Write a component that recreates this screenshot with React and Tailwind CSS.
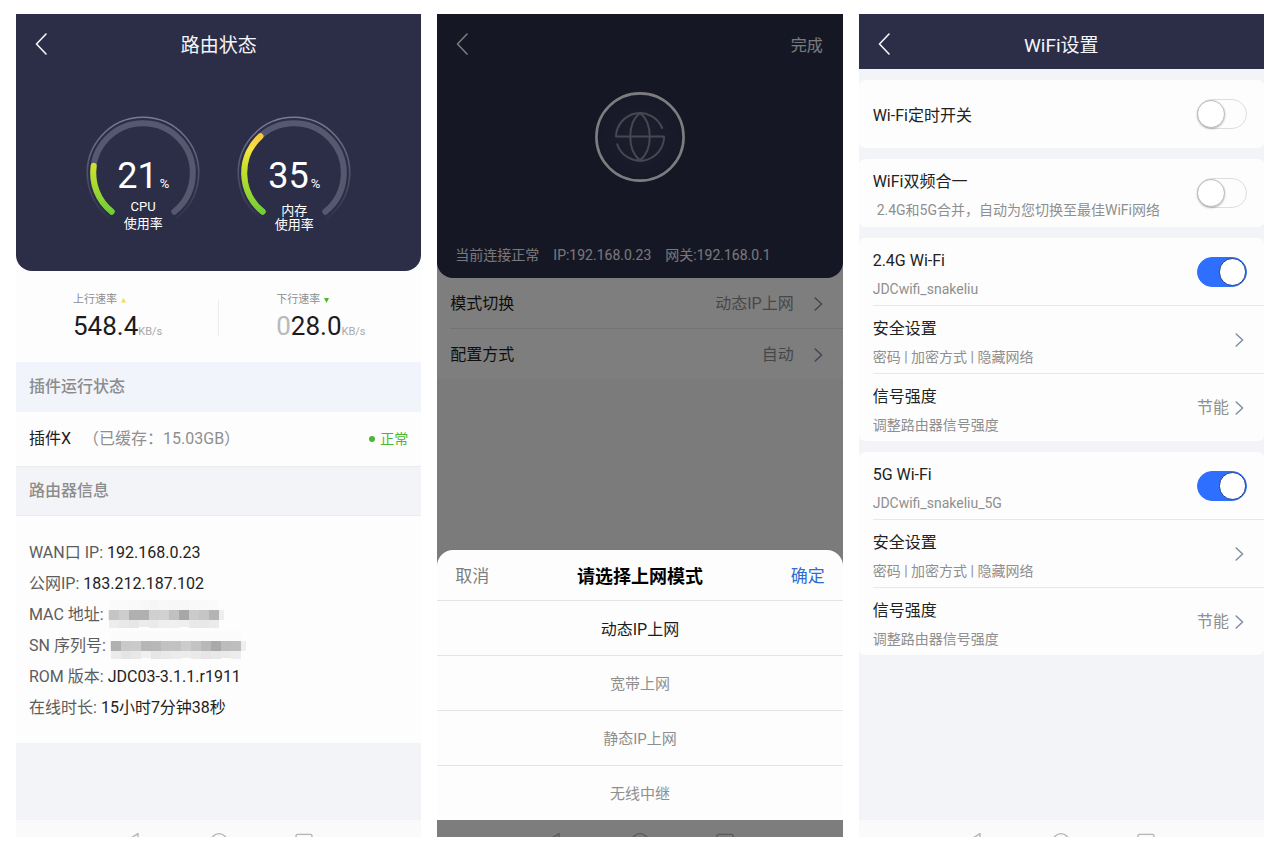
import { useState } from "react";

const CHEVRON_LEFT = "M11 1 L1.5 11 L11 21";

function BackButton({ className }) {
  return (
    <button type="button" aria-label="返回" className={className}>
      <svg width="13" height="22" viewBox="0 0 13 22" fill="none" stroke="currentColor" strokeWidth="1.6" strokeLinecap="round" strokeLinejoin="round">
        <path d={CHEVRON_LEFT} />
      </svg>
    </button>
  );
}

function ChevronRight() {
  return (
    <svg width="9" height="14" viewBox="0 0 9 14" fill="none" stroke="#7f8ea3" strokeWidth="1.5" strokeLinecap="round" strokeLinejoin="round" className="shrink-0" aria-hidden="true">
      <path d="M1.2 1 L7.6 7 L1.2 13" />
    </svg>
  );
}

function TitleBar({ title, action }) {
  return (
    <header className="grid h-[55px] grid-cols-[1fr_auto_1fr] items-center pt-1 text-[#f5f5fa]">
      <BackButton className="w-fit pl-[19px]" />
      <h1 className="pt-1 text-[19px] leading-7">{title}</h1>
      {action && (
        <button type="button" className="justify-self-end pt-1 pr-5 text-base">
          {action}
        </button>
      )}
    </header>
  );
}

function SystemNav() {
  return (
    <nav aria-label="系统导航" className="flex h-[17px] shrink-0 justify-center gap-[67px] overflow-hidden bg-[#fafafa] pt-3 text-[#b4b4b4]">
      <svg width="18" height="18" viewBox="0 0 18 18" fill="none" stroke="currentColor" strokeWidth="1.4" strokeLinejoin="round" className="shrink-0">
        <path d="M13 1.6 V17 L0.8 9.3 Z" />
      </svg>
      <svg width="18" height="18" viewBox="0 0 18 18" fill="none" stroke="currentColor" strokeWidth="1.4" className="shrink-0">
        <circle cx="9" cy="9.6" r="8" />
      </svg>
      <svg width="18" height="18" viewBox="0 0 18 18" fill="none" stroke="currentColor" strokeWidth="1.4" className="shrink-0">
        <rect x="1" y="2.4" width="16" height="15" rx="1.5" />
      </svg>
    </nav>
  );
}

function Phone({ className, children }) {
  return <section className={`relative flex min-h-[823px] min-w-0 flex-col overflow-hidden ${className}`}>{children}</section>;
}

/* ---------- Router status ---------- */

const START = 129;
const SWEEP = 282;

function arc(r, from, to) {
  const point = (deg) => {
    const a = (deg * Math.PI) / 180;
    return `${(57 + r * Math.cos(a)).toFixed(2)} ${(57 + r * Math.sin(a)).toFixed(2)}`;
  };
  return `M${point(from)} A${r} ${r} 0 ${to - from > 180 ? 1 : 0} 1 ${point(to)}`;
}

function Gauge({ id, value, lines, labelClass }) {
  return (
    <div className="relative">
      <svg width="114" height="114" viewBox="0 0 114 114" fill="none" aria-hidden="true">
        <defs>
          <linearGradient id={`${id}-ring`} x1="0" y1="0" x2="0" y2="114" gradientUnits="userSpaceOnUse">
            <stop offset="0" stopColor="#7b7d96" />
            <stop offset="0.5" stopColor="#50526b" />
            <stop offset="0.9" stopColor="#31334d" />
          </linearGradient>
          <linearGradient id={`${id}-bar`} x1="0" y1="97" x2="0" y2="18" gradientUnits="userSpaceOnUse">
            <stop offset="0" stopColor="#6fce33" />
            <stop offset="0.6" stopColor="#cde22c" />
            <stop offset="0.8" stopColor="#f7e63c" />
            <stop offset="1" stopColor="#f5c542" />
          </linearGradient>
        </defs>
        <path d={arc(55.7, 126, 414)} stroke={`url(#${id}-ring)`} strokeWidth="1.6" />
        <path d={arc(49.8, START, START + SWEEP)} stroke="#565870" strokeWidth="6" strokeLinecap="round" />
        <path d={arc(49.8, START, START + (SWEEP * value) / 100)} stroke={`url(#${id}-bar)`} strokeWidth="6" strokeLinecap="round" />
      </svg>
      <div className="absolute inset-x-0 top-10 text-center text-white">
        <p className="text-4xl leading-10">
          {value}
          <span className="ml-0.5 text-[13px] leading-none">%</span>
        </p>
        <p className={labelClass}>
          {lines[0]}
          <br />
          {lines[1]}
        </p>
      </div>
    </div>
  );
}

function Rate({ label, arrow, pad, value }) {
  return (
    <div className="flex-1 pl-[57px]">
      <p className="flex items-center gap-1 text-[11px] leading-4 text-[#8f8f8f]">
        {label}
        {arrow}
      </p>
      <p className="text-[26px] leading-9 text-[#1c1c1c]">
        {pad && <span className="text-[#b9b9b9]">{pad}</span>}
        {value}
        <span className="text-[11px] leading-none text-[#a8a8a8]">KB/s</span>
      </p>
    </div>
  );
}

const MAC_TOP = ["#fafafa", "#fafafa", "#f9f9f9", "#f8f8f8", "#f6f6f6", "#f8f8f8", "#f7f7f7", "#f7f7f7", "#f9f9f9", "#f9f9f9", "#fafafa"];
const MAC_MAIN = ["#c5c5c5", "#cdcdcd", "#b0b0b0", "#b0b0b0", "#d0d0d0", "#d1d1d1", "#c1c1c1", "#a7a7a7", "#cbcbcb", "#c5c5c5", "#b4b4b4"];
const MAC_LOW = ["#ededed", "#e9e9e9", "#e6e6e6", "#ececec", "#eaeaea", "#efefef", "#f0f0f0", "#efefef", "#e9e9e9", "#e8e8e8", "#ebebeb"];
const SN_TOP = Array(13).fill("#fbfbfb");
const SN_MAIN = ["#b0b0b0", "#c9c9c9", "#cacaca", "#b6b6b6", "#b8b8b8", "#c2c2c2", "#c2c2c2", "#cccccc", "#c3c3c3", "#b8b8b8", "#a9a9a9", "#bcbcbc", "#bebebe"];
const SN_LOW = ["#ebebeb", "#e4e4e4", "#e8e8e8", "#f0f0f0", "#e6e6e6", "#e9e9e9", "#ececec", "#ececec", "#eaeaea", "#e6e6e6", "#e8e8e8", "#eaeaea", "#ededed"];

function Redacted({ top, main, low }) {
  const end = 1 + main.length * 10;
  return (
    <svg width={end + 8} height="30" viewBox={`0 0 ${end + 8} 30`} role="img" aria-label="已隐藏">
      <rect x="0" y="10" width="1" height="10" fill="#ececec" />
      <rect x={end} y="10" width="5" height="10" fill="#eeeeee" />
      {main.map((color, i) => (
        <g key={i}>
          <rect x={1 + i * 10} y="0" width="10" height="10" fill={top[i]} />
          <rect x={1 + i * 10} y="10" width="10" height="10" fill={color} />
          <rect x={1 + i * 10} y="20" width="10" height={i % 4 === 3 ? 7 : 8} fill={low[i]} />
        </g>
      ))}
    </svg>
  );
}

const routerInfo = [
  ["WAN口 IP:", "192.168.0.23"],
  ["公网IP:", "183.212.187.102"],
  ["MAC 地址:", <Redacted top={MAC_TOP} main={MAC_MAIN} low={MAC_LOW} />],
  ["SN 序列号:", <Redacted top={SN_TOP} main={SN_MAIN} low={SN_LOW} />],
  ["ROM 版本:", "JDC03-3.1.1.r1911"],
  ["在线时长:", "15小时7分钟38秒"],
];

function RouterStatus() {
  return (
    <Phone className="bg-[#f3f4f8]">
      <div className="bg-[#fdfdfd]">
        <div className="rounded-b-2xl bg-[#2c2e48] pb-[41px]">
          <TitleBar title="路由状态" />
          <div className="mt-[47px] flex justify-center gap-[37px]">
            <Gauge id="cpu" value={21} lines={["CPU", "使用率"]} labelClass="pt-0.5 text-[13px] leading-[17px]" />
            <Gauge id="mem" value={35} lines={["内存", "使用率"]} labelClass="pt-2 text-[13px] leading-[14px]" />
          </div>
        </div>
        <div className="flex items-center pt-[21px] pb-[18px]">
          <Rate
            label="上行速率"
            value="548.4"
            arrow={<svg width="5" height="5" viewBox="0 0 5 5" aria-hidden="true"><path d="M2.5 0 L5 4.5 H0 Z" fill="#f0e04a" /></svg>}
          />
          <div className="h-9 w-px bg-[#ececec]" />
          <Rate
            label="下行速率"
            pad="0"
            value="28.0"
            arrow={<svg width="5" height="5" viewBox="0 0 5 5" aria-hidden="true"><path d="M0 0 H5 L2.5 5 Z" fill="#4cb82f" /></svg>}
          />
        </div>
      </div>
      <h2 className="bg-[#f1f4fa] pl-[13px] text-base leading-[50px] font-medium text-[#8c8c8c]">插件运行状态</h2>
      <div className="flex h-[54px] items-center bg-[#fdfdfd] pr-[13px] pl-[13px] text-base">
        <span className="text-[#1c1c1c]">插件X</span>
        <span className="ml-3 text-[#8f8f8f]">（已缓存：15.03GB）</span>
        <span className="ml-auto flex items-center gap-[5px] text-sm text-[#4cb82f]">
          <span className="size-1.5 rounded-full bg-[#4cb82f]" />
          正常
        </span>
      </div>
      <h2 className="border-y border-[#ececef] bg-[#f3f4f8] pl-[13px] text-base leading-[48px] font-medium text-[#8c8c8c]">路由器信息</h2>
      <dl className="bg-[#fdfdfd] px-[13px] pt-[21px] pb-5 text-base">
        {routerInfo.map(([label, value]) => (
          <div key={label} className="flex h-[31px] items-center gap-1">
            <dt className="text-[#5c5c5c]">{label}</dt>
            <dd className="text-[#222222]">{value}</dd>
          </div>
        ))}
      </dl>
      <div className="mt-auto">
        <SystemNav />
      </div>
    </Phone>
  );
}

/* ---------- Connection mode ---------- */

const modes = ["动态IP上网", "宽带上网", "静态IP上网", "无线中继"];

function SettingLine({ label, value }) {
  return (
    <button type="button" className="ml-[13px] flex h-[50px] items-center pt-0.5 pr-5 text-left text-base">
      <span className="flex-1 text-[#1c1c1c]">{label}</span>
      <span className="mr-5 text-[#8f8f8f]">{value}</span>
      <ChevronRight />
    </button>
  );
}

function ConnectionMode() {
  const [mode, setMode] = useState(modes[0]);
  return (
    <Phone className="bg-[#f7f7f8]">
      <div className="bg-[#fdfdfd]">
        <div className="flex h-[264px] flex-col rounded-b-2xl bg-[#2c2e48]">
          <TitleBar title="" action="完成" />
          <svg width="90" height="90" viewBox="0 0 90 90" fill="none" className="mx-auto mt-[23px]" aria-hidden="true">
            <defs>
              <radialGradient id="globe-fill">
                <stop offset="0" stopColor="#3a3d5c" />
                <stop offset="1" stopColor="#2e3150" />
              </radialGradient>
            </defs>
            <circle cx="45" cy="45" r="43.6" fill="url(#globe-fill)" stroke="#fafaff" strokeWidth="2.6" />
            <g stroke="#8e8fa0" strokeWidth="2" strokeLinecap="round" strokeLinejoin="round">
              <path d="M67.2 36 A24 24 0 0 0 21 44.5 H69 A24 24 0 0 1 22.2 52.2" />
              <path d="M45 21 C32 31 32 58 45 68.5 C58 58 58 31 45 21 Z" />
            </g>
          </svg>
          <p className="mt-auto flex gap-3.5 px-[18px] pb-[11px] text-sm leading-6 text-[#f0f0f5]">
            <span>当前连接正常</span>
            <span>IP:192.168.0.23</span>
            <span>网关:192.168.0.1</span>
          </p>
        </div>
        <div className="flex flex-col">
          <SettingLine label="模式切换" value="动态IP上网" />
          <div className="ml-[13px] h-px bg-[#e6e6e6]" />
          <SettingLine label="配置方式" value="自动" />
        </div>
      </div>
      <div className="mt-auto">
        <SystemNav />
      </div>
      <div className="absolute inset-0 flex flex-col justify-end bg-black/50 pb-[17px]">
        <div role="dialog" aria-labelledby="mode-title" className="rounded-t-2xl bg-[#fdfdfd]">
          <div className="grid h-[50px] grid-cols-[1fr_auto_1fr] items-center px-[18px] pt-1">
            <button type="button" className="justify-self-start text-[17px] text-[#7d7d7d]">取消</button>
            <h2 id="mode-title" className="text-lg font-bold text-black">请选择上网模式</h2>
            <button type="button" className="justify-self-end text-[17px] text-[#2f6bd0]">确定</button>
          </div>
          {modes.map((name) => (
            <button
              key={name}
              type="button"
              aria-pressed={name === mode}
              onClick={() => setMode(name)}
              className={`block h-[55px] w-full border-t border-[#e4e4e4] pt-[3px] text-center ${name === mode ? "text-base text-[#1c1c1c]" : "text-[15px] text-[#8f8f8f]"}`}
            >
              {name}
            </button>
          ))}
        </div>
      </div>
    </Phone>
  );
}

/* ---------- WiFi settings ---------- */

function Toggle({ id, defaultChecked }) {
  return (
    <input
      id={id}
      type="checkbox"
      role="switch"
      defaultChecked={defaultChecked}
      className="flex h-[30px] w-[50px] shrink-0 appearance-none items-center rounded-full border border-[#dedede] bg-[#fdfdfd] before:-ml-px before:size-7 before:rounded-full before:border before:border-[#bcbcbc] before:bg-white before:shadow-[0_1px_2px_rgba(0,0,0,0.25)] checked:border-[#2f6fff] checked:bg-[#2f6fff] checked:before:ml-[21px] checked:before:border-[#1d3f7d] checked:before:shadow-none"
    />
  );
}

function RowText({ title, sub, htmlFor, indent }) {
  const Title = htmlFor ? "label" : "span";
  return (
    <span className={`flex flex-1 flex-col ${sub ? "pt-1.5" : "pt-1"}`}>
      <Title htmlFor={htmlFor} className="text-base leading-7 text-[#222222]">{title}</Title>
      {sub && <span className={`text-sm leading-7 text-[#8f8f8f] ${indent ? "pl-1" : ""}`}>{sub}</span>}
    </span>
  );
}

function ToggleRow({ id, on, className, ...text }) {
  return (
    <div className={`flex items-center pr-[17px] ${className}`}>
      <RowText htmlFor={id} {...text} />
      <Toggle id={id} defaultChecked={on} />
    </div>
  );
}

function LinkRow({ value, ...text }) {
  return (
    <button type="button" className="flex h-[67px] items-center pr-5 text-left">
      <RowText {...text} />
      {value && <span className="mr-1.5 text-base text-[#8f8f8f]">{value}</span>}
      <ChevronRight />
    </button>
  );
}

function Card({ children }) {
  return <div className="rounded-md bg-[#fdfdfd] pl-3.5">{children}</div>;
}

function Band({ id, title, ssid }) {
  return (
    <Card>
      <div className="flex flex-col">
        <ToggleRow id={id} on title={title} sub={ssid} className="h-[67px]" />
        <div className="h-px bg-[#e8e8ea]" />
        <LinkRow title="安全设置" sub="密码 | 加密方式 | 隐藏网络" />
        <div className="h-px bg-[#e8e8ea]" />
        <LinkRow title="信号强度" sub="调整路由器信号强度" value="节能" />
      </div>
    </Card>
  );
}

function WifiSettings() {
  return (
    <Phone className="bg-[#f3f4f8]">
      <div className="bg-[#2c2e48]">
        <TitleBar title="WiFi设置" />
      </div>
      <div className="flex flex-col gap-[11px] pt-[11px]">
        <Card>
          <ToggleRow id="schedule" title="Wi-Fi定时开关" className="h-[68px]" />
        </Card>
        <Card>
          <ToggleRow id="merge" title="WiFi双频合一" sub="2.4G和5G合并，自动为您切换至最佳WiFi网络" indent className="h-[68px]" />
        </Card>
        <Band id="band24" title="2.4G Wi-Fi" ssid="JDCwifi_snakeliu" />
        <Band id="band5" title="5G Wi-Fi" ssid="JDCwifi_snakeliu_5G" />
      </div>
      <div className="mt-auto">
        <SystemNav />
      </div>
    </Phone>
  );
}

export default function App() {
  return (
    <main className="min-h-screen bg-white px-4 py-3.5 font-['Roboto','Noto_Sans_CJK_SC',sans-serif]">
      <div className="grid grid-cols-3 gap-4">
        <RouterStatus />
        <ConnectionMode />
        <WifiSettings />
      </div>
    </main>
  );
}
